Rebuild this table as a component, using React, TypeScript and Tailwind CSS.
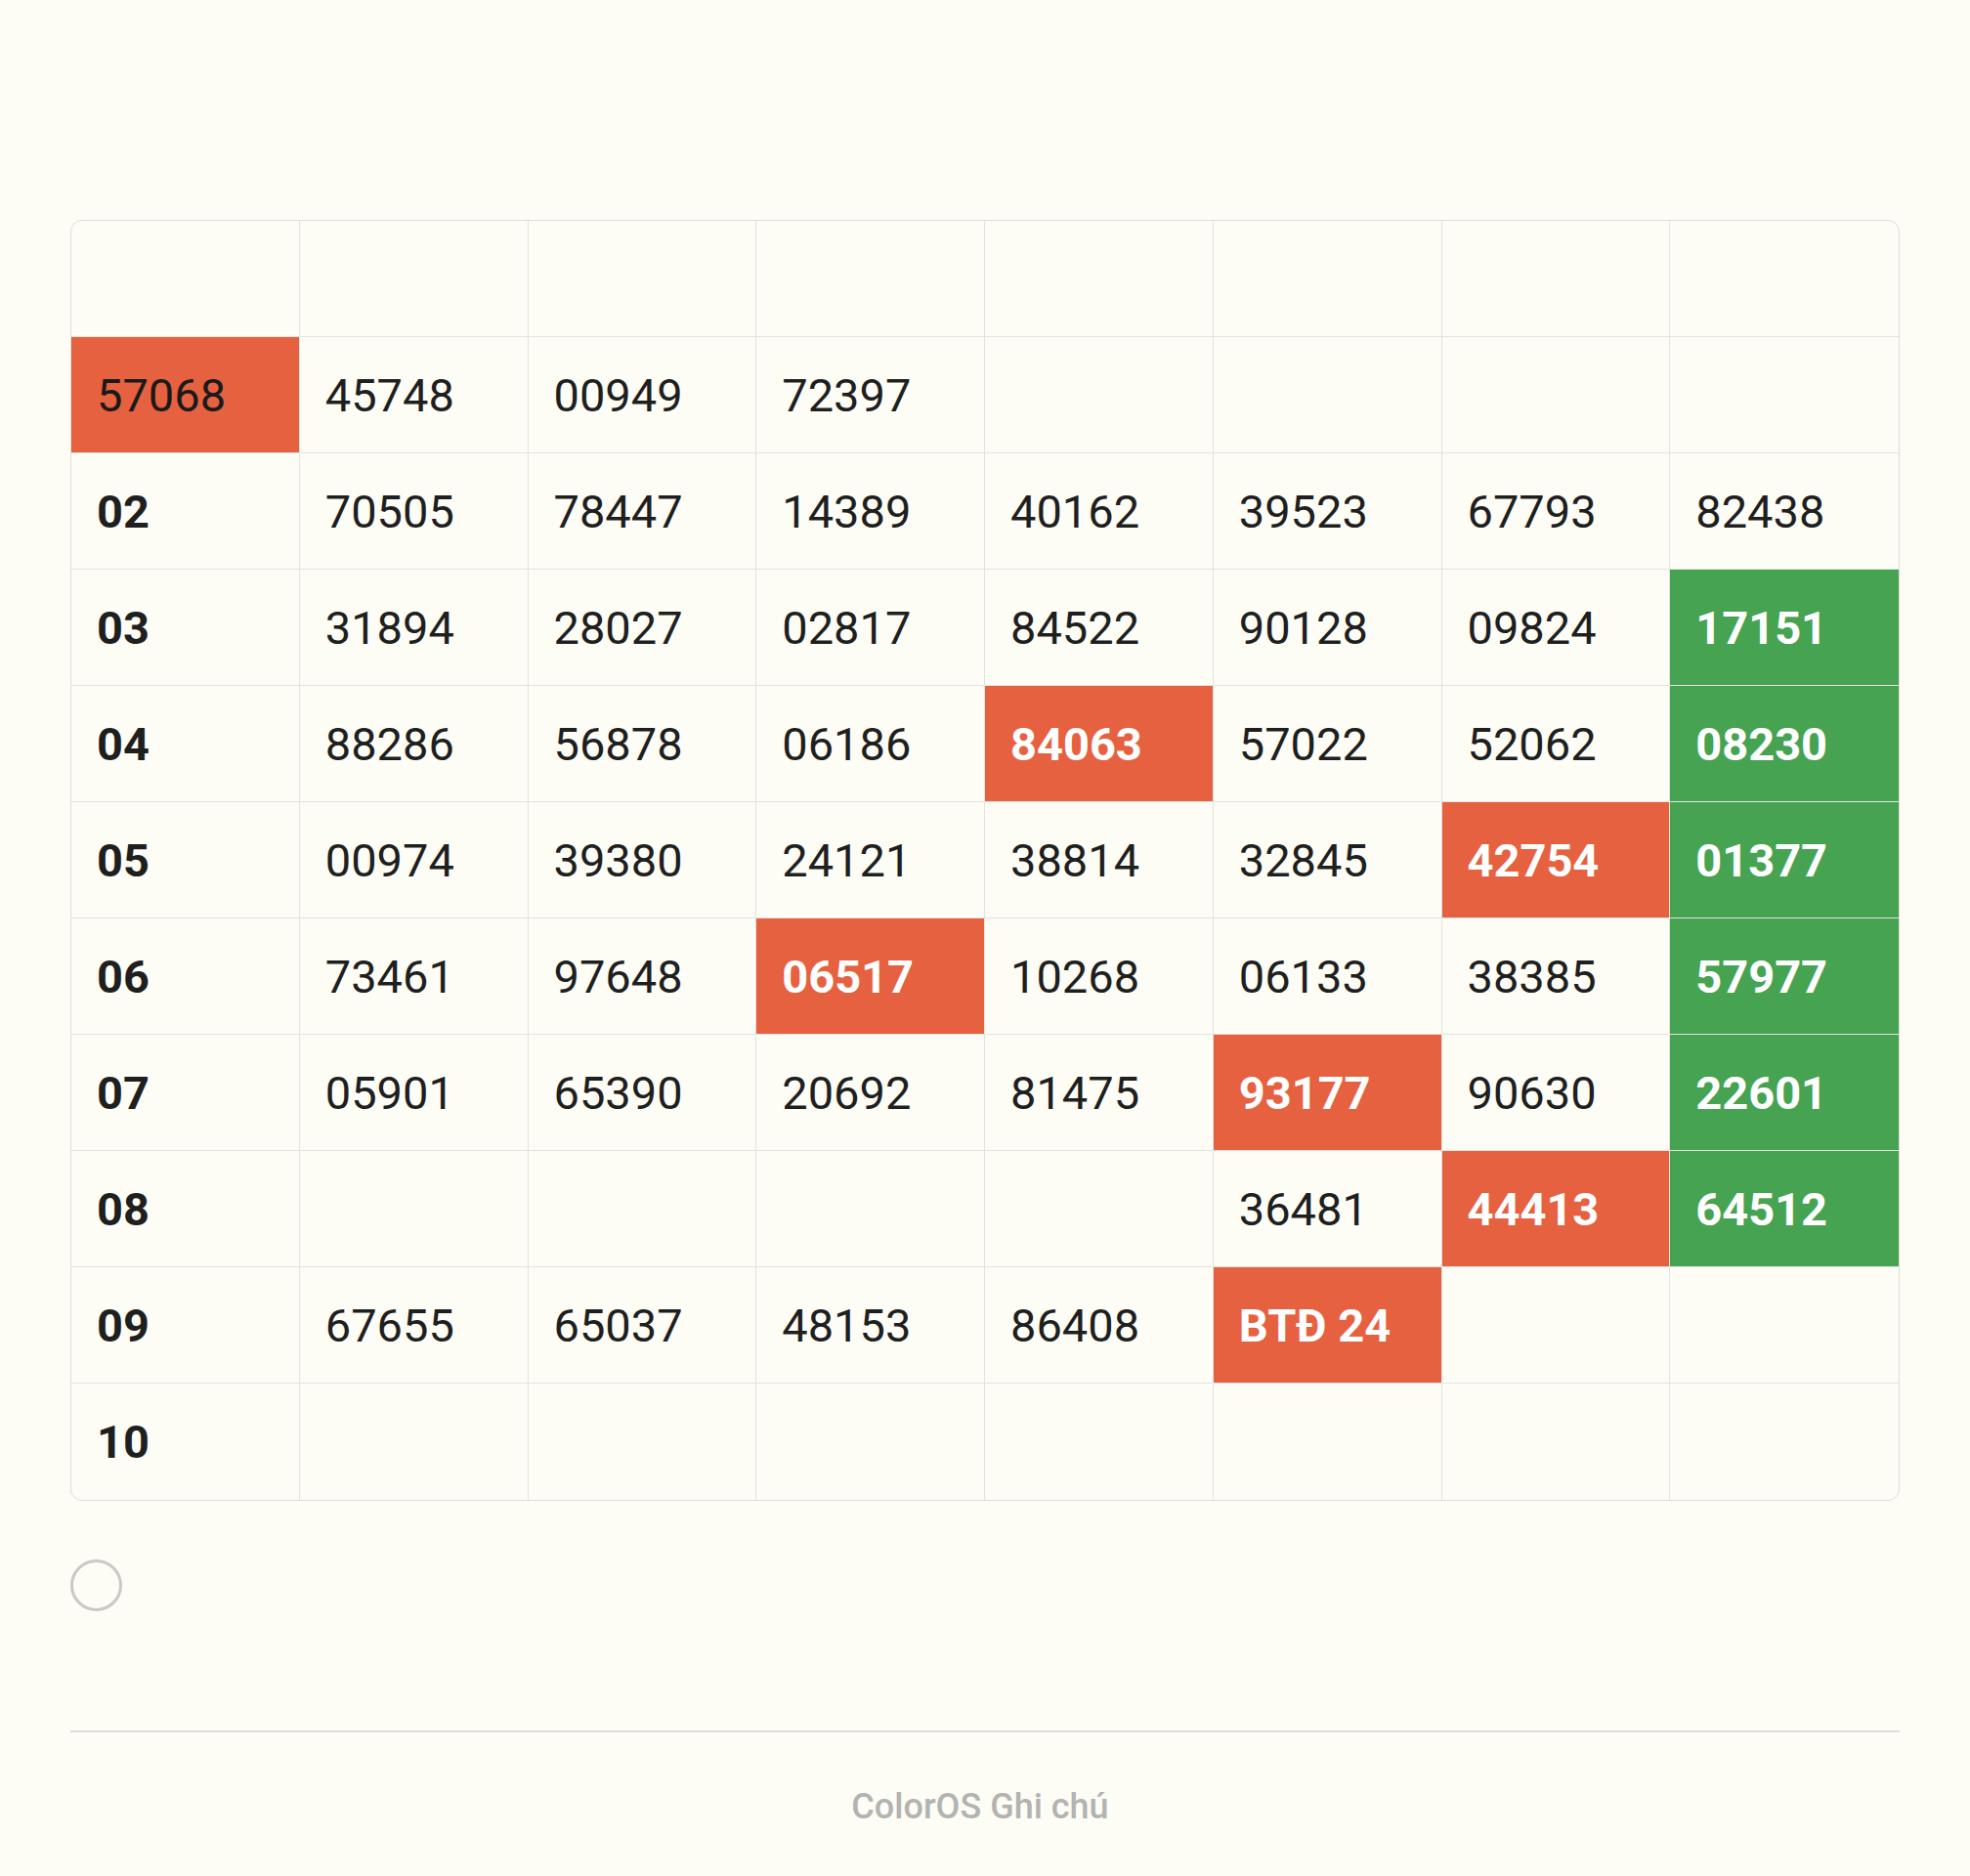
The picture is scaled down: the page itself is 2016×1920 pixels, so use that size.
type Tone = 'plain' | 'label' | 'red' | 'redPlain' | 'green';

interface Cell {
    text: string;
    tone?: Tone;
}

const c = (text: string, tone: Tone = 'plain'): Cell => ({ text, tone });
const empty = (n: number): Cell[] => Array.from({ length: n }, () => c(''));

const rows: Cell[][] = [
    empty(8),
    [c('57068', 'redPlain'), c('45748'), c('00949'), c('72397'), ...empty(4)],
    [c('02', 'label'), c('70505'), c('78447'), c('14389'), c('40162'), c('39523'), c('67793'), c('82438')],
    [c('03', 'label'), c('31894'), c('28027'), c('02817'), c('84522'), c('90128'), c('09824'), c('17151', 'green')],
    [c('04', 'label'), c('88286'), c('56878'), c('06186'), c('84063', 'red'), c('57022'), c('52062'), c('08230', 'green')],
    [c('05', 'label'), c('00974'), c('39380'), c('24121'), c('38814'), c('32845'), c('42754', 'red'), c('01377', 'green')],
    [c('06', 'label'), c('73461'), c('97648'), c('06517', 'red'), c('10268'), c('06133'), c('38385'), c('57977', 'green')],
    [c('07', 'label'), c('05901'), c('65390'), c('20692'), c('81475'), c('93177', 'red'), c('90630'), c('22601', 'green')],
    [c('08', 'label'), ...empty(4), c('36481'), c('44413', 'red'), c('64512', 'green')],
    [c('09', 'label'), c('67655'), c('65037'), c('48153'), c('86408'), c('BTĐ 24', 'red'), ...empty(2)],
    [c('10', 'label'), ...empty(7)],
];

const toneClass: Record<Tone, string> = {
    plain: 'text-[#1f1f1f] font-normal',
    label: 'text-[#1f1f1f] font-bold',
    red: 'bg-[#e56140] text-white font-bold',
    redPlain: 'bg-[#e56140] text-[#1a1a1a] font-normal',
    green: 'bg-[#46a352] text-white font-bold',
};

export default function App() {
    return (
        <div
            className="min-h-[1920px] w-full bg-[#fdfdf6] px-[72px] pt-[225px]"
            style={{ fontFamily: 'Roboto, "Noto Sans", sans-serif' }}
        >
            <div className="grid grid-cols-8 overflow-hidden rounded-[12px] border border-[#dddddb]">
                {rows.map((row, r) =>
                    row.map((cell, i) => (
                        <div
                            key={`${r}-${i}`}
                            className={[
                                'flex h-[119px] items-center pl-[26px] text-[47px] leading-none',
                                i < 7 ? 'border-r border-[#e3e3e0]' : '',
                                r < rows.length - 1 ? 'border-b border-[#e3e3e0]' : '',
                                toneClass[cell.tone ?? 'plain'],
                            ].join(' ')}
                        >
                            {cell.text}
                        </div>
                    ))
                )}
            </div>

            <div className="mt-[60px] h-[53px] w-[53px] rounded-full border-[3px] border-[#c9c9c7]" />

            <div className="mt-[122px] h-[2px] w-full bg-[#dededb]" />

            <p className="mt-[58px] pr-[10px] text-center text-[36px] font-medium leading-none text-[#b3b3b1]">
                ColorOS Ghi chú
            </p>
        </div>
    );
}
